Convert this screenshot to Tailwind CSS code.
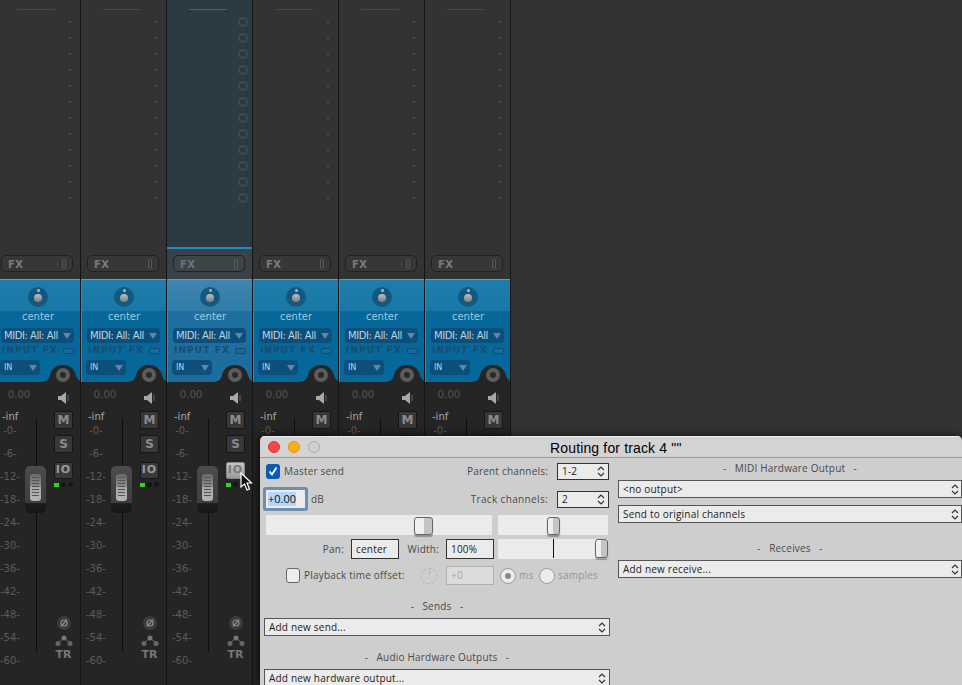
<!DOCTYPE html>
<html lang="en">
<head>
    <meta charset="UTF-8">
    <title>Routing for track 4</title>
    <script src="https://cdn.jsdelivr.net/npm/@tailwindcss/browser@4"></script>
</head>
<body class="bg-[#333333] overflow-hidden">
    <div class="relative w-[962px] h-[685px] overflow-hidden font-['DejaVu_Sans',sans-serif]">
        <!-- Mixer strips, filled in by the script below -->
        <div id="mixer" class="flex -ml-[5px] h-[685px]"></div>

        <!-- Mouse cursor -->
        <svg class="absolute left-[239px] top-[472px] z-10" width="14" height="20" viewBox="0 0 14 20">
            <path d="M2 1 L2 15 L5.5 12 L8 18 L10.5 17 L8 11 L12.5 11 Z" fill="#111" stroke="#fff" stroke-width="1.2"/>
        </svg>

        <!-- Routing window -->
        <div class="absolute left-[260px] top-[436px] w-[702px] h-[249px] overflow-hidden rounded-t-[5px] bg-[#cecece] shadow-[-3px_-1px_8px_rgba(0,0,0,0.6)] font-['Open_Sans',sans-serif] text-[10px] tracking-[0.2px] text-[#4a4a4a] whitespace-nowrap">
            <div class="relative flex items-center h-[22px] bg-[#d3d3d3] border-t border-t-[#ececec] border-b border-b-[#9a9a9a]">
                <div class="flex items-center gap-[8px] pl-[8px]">
                    <span class="w-[12px] h-[12px] rounded-full bg-[#fb4646] border border-[#e0302e]"></span>
                    <span class="w-[12px] h-[12px] rounded-full bg-[#fdae12] border border-[#dd9a10]"></span>
                    <span class="w-[12px] h-[12px] rounded-full bg-[#cfcfcf] border border-[#aaaaaa]"></span>
                </div>
                <div class="absolute left-[290px] top-[2px] font-['Liberation_Sans',sans-serif] text-[14px] leading-[18px] text-black tracking-[0.15px]">Routing for track 4 ""</div>
            </div>

            <div class="flex">
                <!-- Left column -->
                <div class="w-[350px] pl-[4px] shrink-0">
                    <div class="flex items-center h-[16px] mt-[5px]">
                        <span class="flex items-center justify-center w-[14px] h-[15px] ml-[2px] rounded-[3px] bg-[#0b5cb0]">
                            <svg width="12" height="12" viewBox="0 0 12 12"><path d="M2.5 6.5 L5 9.5 L9.5 2.5" fill="none" stroke="#fff" stroke-width="1.8"/></svg>
                        </span>
                        <span class="ml-[4px]">Master send</span>
                        <span class="ml-auto mr-[9px]">Parent channels:</span>
                        <div class="flex items-center justify-between w-[52px] h-[17px] pl-[4px] pr-[3px] mr-[1px] border border-[#333] bg-[#ebebeb] text-[#222]">1-2<svg width="8" height="13" viewBox="0 0 8 13"><path d="M1 5 L4 2 L7 5 M1 8 L4 11 L7 8" fill="none" stroke="#333" stroke-width="1.2"/></svg></div>
                    </div>
                    <div class="flex items-center h-[24px] mt-[8px]">
                        <div class="flex items-center w-[45px] h-[24px] -ml-[1px] border-[3px] border-[#6b8fb3] rounded-[3px] bg-[#ececec] pl-[2px] text-[11px] tracking-normal text-[#111]"><span class="bg-[#b4d6fb] leading-[14px]">+0.00</span></div>
                        <span class="ml-[3px]">dB</span>
                        <span class="ml-auto mr-[9px] tracking-[0.35px]">Track channels:</span>
                        <div class="flex items-center justify-between w-[52px] h-[17px] pl-[4px] pr-[3px] mr-[1px] border border-[#333] bg-[#ebebeb] text-[#222]">2<svg width="8" height="13" viewBox="0 0 8 13"><path d="M1 5 L4 2 L7 5 M1 8 L4 11 L7 8" fill="none" stroke="#333" stroke-width="1.2"/></svg></div>
                    </div>
                    <div class="flex gap-[6px] ml-[2px] mt-[4px]">
                        <div class="relative w-[226px] h-[20px] bg-[#ebebeb]">
                            <div class="absolute left-[148px] top-[2px] w-[19px] h-[18px] rounded-[3px] border border-[#666] bg-[linear-gradient(90deg,#f0f0f0_50%,#c4c4c4_50%)] shadow-[0_2px_1px_rgba(0,0,0,0.3)]"></div>
                        </div>
                        <div class="relative w-[110px] h-[20px] bg-[#ebebeb]">
                            <div class="absolute left-[49px] top-[2px] w-[13px] h-[18px] rounded-[3px] border border-[#666] bg-[linear-gradient(90deg,#f0f0f0_50%,#c4c4c4_50%)] shadow-[0_2px_1px_rgba(0,0,0,0.3)]"></div>
                        </div>
                    </div>
                    <div class="flex items-center mt-[4px] h-[20px]">
                        <span class="w-[80px] text-right">Pan:</span>
                        <div class="flex items-center w-[48px] h-[20px] ml-[7px] pl-[4px] border border-[#333] bg-[#ebebeb] text-[#222]">center</div>
                        <span class="w-[40px] text-right">Width:</span>
                        <div class="flex items-center w-[48px] h-[20px] ml-[7px] pl-[4px] border border-[#333] bg-[#ebebeb] text-[#222]">100%</div>
                        <div class="relative w-[110px] h-[20px] ml-[4px] bg-[#ebebeb]">
                            <div class="absolute left-[55px] top-0 w-px h-[19px] bg-[#111]"></div>
                            <div class="absolute right-0 top-0 w-[13px] h-[19px] rounded-[3px] border border-[#666] bg-[linear-gradient(90deg,#f0f0f0_50%,#c4c4c4_50%)] shadow-[0_2px_1px_rgba(0,0,0,0.3)]"></div>
                        </div>
                    </div>
                    <div class="flex items-center mt-[7px] h-[19px]">
                        <span class="w-[14px] h-[15px] ml-[22px] rounded-[3px] border border-[#666] bg-[#ececec]"></span>
                        <span class="w-[101px] ml-[4px]">Playback time offset:</span>
                        <span class="flex justify-center w-[16px] h-[16px] ml-[16px] rounded-full border border-dashed border-[#b4b4b4]"><span class="w-px h-[5px] mt-[1px] bg-[#b4b4b4]"></span></span>
                        <div class="flex items-center w-[48px] h-[19px] ml-[9px] pl-[4px] border border-[#b0b0b0] bg-[#dcdcdc] text-[#a8a8a8]">+0</div>
                        <span class="flex items-center justify-center w-[16px] h-[16px] ml-[6px] rounded-full border border-[#9a9a9a] bg-[#ececec]"><span class="w-[6px] h-[6px] rounded-full bg-[#888]"></span></span>
                        <span class="w-[14px] ml-[3px] text-[#949494]">ms</span>
                        <span class="w-[16px] h-[16px] ml-[6px] rounded-full border border-[#9a9a9a] bg-[#ececec]"></span>
                        <span class="ml-[3px] text-[#949494]">samples</span>
                    </div>
                    <div class="w-[346px] mt-[13px] text-center leading-[16px]">-&nbsp;&nbsp; Sends &nbsp;&nbsp;-</div>
                    <div class="flex items-center justify-between w-[346px] h-[18px] mt-[4px] pl-[4px] pr-[3px] border border-[#555] bg-[#ebebeb] text-[#222]">Add new send...<svg width="8" height="13" viewBox="0 0 8 13"><path d="M1 5 L4 2 L7 5 M1 8 L4 11 L7 8" fill="none" stroke="#333" stroke-width="1.2"/></svg></div>
                    <div class="w-[346px] mt-[13px] text-center leading-[16px]">-&nbsp;&nbsp; Audio Hardware Outputs &nbsp;&nbsp;-</div>
                    <div class="flex items-center justify-between w-[346px] h-[18px] mt-[4px] pl-[4px] pr-[3px] border border-[#555] bg-[#ebebeb] text-[#222]">Add new hardware output...<svg width="8" height="13" viewBox="0 0 8 13"><path d="M1 5 L4 2 L7 5 M1 8 L4 11 L7 8" fill="none" stroke="#333" stroke-width="1.2"/></svg></div>
                </div>

                <!-- Right column -->
                <div class="flex-1 pl-[8px]">
                    <div class="mt-[2px] text-center leading-[16px]">-&nbsp;&nbsp; MIDI Hardware Output &nbsp;&nbsp;-</div>
                    <div class="flex items-center justify-between h-[18px] mt-[4px] pl-[4px] pr-[2px] border border-[#555] bg-[#ebebeb] text-[#222]">&lt;no output&gt;<svg width="8" height="13" viewBox="0 0 8 13"><path d="M1 5 L4 2 L7 5 M1 8 L4 11 L7 8" fill="none" stroke="#333" stroke-width="1.2"/></svg></div>
                    <div class="flex items-center justify-between h-[18px] mt-[7px] pl-[4px] pr-[2px] border border-[#555] bg-[#ebebeb] text-[#222]">Send to original channels<svg width="8" height="13" viewBox="0 0 8 13"><path d="M1 5 L4 2 L7 5 M1 8 L4 11 L7 8" fill="none" stroke="#333" stroke-width="1.2"/></svg></div>
                    <div class="mt-[17px] text-center leading-[16px]">-&nbsp;&nbsp; Receives &nbsp;&nbsp;-</div>
                    <div class="flex items-center justify-between h-[18px] mt-[4px] pl-[4px] pr-[2px] border border-[#555] bg-[#ebebeb] text-[#222]">Add new receive...<svg width="8" height="13" viewBox="0 0 8 13"><path d="M1 5 L4 2 L7 5 M1 8 L4 11 L7 8" fill="none" stroke="#333" stroke-width="1.2"/></svg></div>
                </div>
            </div>
        </div>
    </div>

    <script>
        const scale = ['-0-', '-6-', '-12-', '-18-', '-24-', '-30-', '-36-', '-42-', '-48-', '-54-', '-60-'];

        // covered strips sit behind the routing window, so only their top part is drawn
        function strip(selected, covered) {
            const top = selected ? 'bg-[#2b3a43]' : '';
            const blue = selected
                ? 'bg-[linear-gradient(180deg,#3d86af_0%,#2f7ca9_30%,#1f70a0_31%,#1c6d9e_100%)]'
                : 'bg-[linear-gradient(180deg,#1f7dac_0%,#1a78a8_30%,#05679a_31%,#05679a_100%)]';
            const io = selected
                ? 'bg-[linear-gradient(180deg,#c4c4c4,#9a9a9a)] text-[#777] border-[#888]'
                : 'bg-[#3a3a3a] text-[#9a9a9a] border-[#161616]';
            const rings = selected
                ? Array(12).fill('<span class="w-[10px] h-[10px] rounded-full border-[2px] border-[#3c4c53]"></span>').join('')
                : Array(12).fill('<span class="w-[2px] h-[2px] ml-[3px] my-[4px] bg-[#4a4a4a]"></span>').join('');
            const labels = covered ? scale.slice(0, 1) : scale;

            return `
            <div class="flex flex-col w-[86px] h-[685px] shrink-0 border-r border-r-[#141414] overflow-hidden">
                <!-- Track area -->
                <div class="relative flex flex-col h-[279px] ${top}">
                    <div class="w-[38px] h-px mt-[9px] ml-[22px] ${selected ? 'bg-[#4e5f65]' : 'bg-[#474747]'}"></div>
                    <div class="flex flex-col gap-[6px] w-[10px] mt-[7px] ml-[71px]">${rings}</div>
                    <div class="absolute left-0 right-0 top-[249px] bottom-0 ${selected ? 'bg-[#3a4247] border-t-2 border-t-[#1f8ac4] -mt-[2px]' : ''}"></div>
                    <div class="absolute left-[6px] top-[255px] flex items-center justify-between w-[72px] h-[17px] pl-[6px] pr-[6px] rounded-[5px] border border-[#222] ${selected ? 'bg-[#3d4549] text-[#6d7478]' : 'bg-[#373737] text-[#7c7c7c]'} text-[10px] font-bold tracking-[0.5px]">
                        <span class="pt-[1px]">FX</span><span class="w-[4px] h-[10px] rounded-[2px] border border-[#5a5a5a]"></span>
                    </div>
                </div>

                <!-- Blue input panel -->
                <div class="relative flex flex-col h-[103px] border-t border-t-[#5d9fc2] border-l border-l-[#3d88b0] ${blue}">
                    <div class="flex justify-center w-[84px] mt-[7px]">
                        <span class="relative flex items-center justify-center w-[20px] h-[20px] rounded-full bg-[#13597f]">
                            <span class="w-[8px] h-[8px] mt-[2px] rounded-full bg-[linear-gradient(180deg,#c0c0c0,#7c7c7c)]"></span>
                            <span class="absolute top-[2px] w-[3px] h-[3px] rounded-full bg-[#b0b8bc]"></span>
                        </span>
                    </div>
                    <div class="w-[84px] mt-[3px] text-center text-[10px] leading-[13px] text-[#a3c8da]">center</div>
                    <div class="flex items-center justify-between w-[73px] h-[15px] ml-[5px] mt-[5px] pl-[3px] pr-[3px] rounded-[4px] bg-[#0d4f7a] text-[10px] tracking-[-0.45px] whitespace-nowrap text-[#bcd4e0]">MIDI: All: All<span class="w-0 h-0 border-x-[4px] border-x-transparent border-t-[6px] border-t-[#5b8aa6]"></span></div>
                    <div class="flex items-center justify-between w-[72px] h-[10px] ml-[6px] mt-[3px] text-[9px] font-bold tracking-[1.1px] whitespace-nowrap text-[#164d70]">INPUT FX<span class="w-[11px] h-[6px] rounded-[2px] bg-[#1a6a98] border border-[#0f4a70]"></span></div>
                    <div class="flex items-center justify-between w-[40px] h-[15px] ml-[4px] mt-[4px] pl-[4px] pr-[3px] rounded-[4px] bg-[#0d4f7a] text-[8px] text-[#bcd4e0]">IN<span class="w-0 h-0 border-x-[4px] border-x-transparent border-t-[6px] border-t-[#5b8aa6]"></span></div>
                    <svg class="absolute left-[45px] bottom-0" width="44" height="17" viewBox="0 0 44 17">
                        <path d="M0 17 C6 17 8 14 9 10 C11 3 16 0 22 0 C28 0 33 3 35 10 C36 14 38 17 44 17 Z" fill="#252525"/>
                        <circle cx="22" cy="10" r="5" fill="#2a2a2a" stroke="#5c5c5c" stroke-width="4"/>
                    </svg>
                </div>

                <!-- Fader section -->
                <div class="flex flex-1 bg-[#252525]">
                    <div class="relative w-[59px] shrink-0">
                        <div class="w-[48px] pt-[6px] text-center text-[10px] leading-[14px] text-[#565656]">0.00</div>
                        <div class="mt-[8px] pl-[7px] text-[10px] leading-[14px] text-[#a8a8a8]">-inf</div>
                        <div class="flex flex-col gap-[9px] w-[30px] text-center text-[10px] leading-[14px] text-[#5c5c5c]">
                            ${labels.map(s => `<span class="h-[14px]">${s}</span>`).join('')}
                        </div>
                        <div class="absolute left-[41px] top-[36px] w-px h-[234px] bg-[#0e0e0e]"></div>
                        ${covered ? '' : `<div class="absolute left-[30px] top-[84px] flex justify-center w-[21px] h-[47px] pt-[8px] rounded-[5px] bg-[linear-gradient(180deg,#4c4c4c_0%,#3d3d3d_78%,#1c1c1c_80%,#161616_100%)]">
                            <div class="flex flex-col gap-[2px] w-[11px] h-[27px] pt-[3px] items-center rounded-[3px] bg-[linear-gradient(180deg,#6a6a6a_0%,#8a8a8a_45%,#a8a8a8_50%,#b4b4b4_100%)]">
                                <span class="w-[7px] h-px bg-[#555]"></span><span class="w-[7px] h-px bg-[#555]"></span><span class="w-[7px] h-px bg-[#555]"></span><span class="w-[7px] h-px bg-[#555]"></span><span class="w-[7px] h-px bg-[#555]"></span><span class="w-[7px] h-px bg-[#555]"></span><span class="w-[7px] h-px bg-[#555]"></span>
                            </div>
                        </div>`}
                    </div>
                    <div class="flex flex-col items-center w-[19px]">
                        <svg class="mt-[9px]" width="13" height="14" viewBox="0 0 13 14"><path d="M1 5 H4 L9 1 V13 L4 9 H1 Z" fill="#a8a8a8"/><path d="M11 4 V10" stroke="#666" stroke-width="1"/></svg>
                        <div class="flex items-center justify-center w-[19px] h-[18px] mt-[6px] border border-[#161616] rounded-[2px] bg-[#383838] text-[12px] font-bold text-[#8c8c8c]">M</div>
                        <div class="flex items-center justify-center w-[19px] h-[18px] mt-[6px] border border-[#161616] rounded-[2px] bg-[#383838] text-[12px] font-bold text-[#8c8c8c]">${covered ? '' : 'S'}</div>
                        ${covered ? '' : `<div class="flex items-center justify-center w-[19px] h-[17px] mt-[9px] border rounded-[2px] ${io} text-[11px] font-bold tracking-[1px]">IO</div>
                        <div class="flex items-center gap-[2px] mt-[3px]">
                            <span class="w-[5px] h-[4px] bg-[#2fd41f]"></span><span class="w-[5px] h-[5px] rounded-full bg-[#161616]"></span><span class="w-[5px] h-[5px] rounded-full bg-[#161616]"></span>
                        </div>
                        <div class="flex items-center justify-center w-[14px] h-[14px] mt-[129px] rounded-full bg-[#3c3c3c]">
                            <svg width="10" height="10" viewBox="0 0 10 10"><circle cx="5" cy="5" r="3" fill="none" stroke="#8a8a8a" stroke-width="1.2"/><path d="M2 8.5 L8 1.5" stroke="#8a8a8a" stroke-width="1.2"/></svg>
                        </div>
                        <svg class="mt-[5px] shrink-0" width="18" height="12" viewBox="0 0 18 12"><path d="M3 8 L9 3 L15 8" fill="none" stroke="#666" stroke-width="1"/><circle cx="9" cy="3" r="2.5" fill="#777"/><circle cx="3" cy="8.5" r="2.5" fill="#666"/><circle cx="15" cy="8.5" r="2.5" fill="#666"/></svg>
                        <div class="mt-[1px] text-[11px] leading-[13px] font-bold text-[#777]">TR</div>`}
                    </div>
                </div>
            </div>`;
        }

        document.getElementById('mixer').innerHTML = [0, 1, 2, 3, 4, 5].map(i => strip(i === 2, i > 2)).join('');
    </script>
</body>
</html>
